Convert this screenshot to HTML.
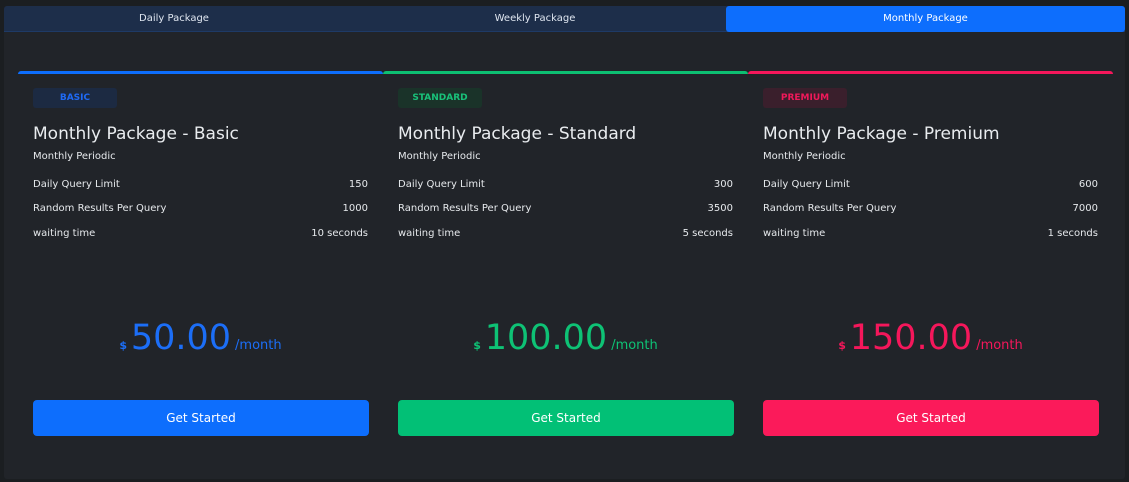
<!DOCTYPE html>
<html><head><style>
*{margin:0;padding:0;box-sizing:border-box}
body{width:1129px;height:482px;background:#1b1e21;font-family:"DejaVu Sans","Liberation Sans",sans-serif;color:#e6e9ec;overflow:hidden;position:relative}
.panel{position:absolute;left:4px;top:6px;width:1121px;height:473px;background:#212429;border-radius:3px}
.tabs{position:absolute;left:0;top:0;width:1121px;height:26px;background:#1d2e4a;border-bottom:1px solid #1e3a66;border-radius:3px 3px 0 0}
.tab{position:absolute;top:0;height:26px;line-height:25px;text-align:center;font-size:10px;color:#dfe6f0}
.tab.act{background:#0d6efd;border-radius:3px;color:#fff}
.card{position:absolute;top:65px;width:365px;height:400px;border-top:3px solid;border-radius:3px 3px 0 0}
.in{position:absolute;left:15px;right:15px;top:0}
.badge{position:absolute;top:14px;left:0;width:84px;height:20px;border-radius:3px;font-size:9px;font-weight:bold;text-align:center;line-height:20px}
.title{position:absolute;top:50px;left:0;font-size:17px;color:#e9ecef;white-space:nowrap}
.sub{position:absolute;top:77px;left:0;font-size:10px}
.row{position:absolute;left:0;right:0;font-size:10px;display:flex;justify-content:space-between}
.price{position:absolute;top:244px;left:0;right:0;text-align:center;white-space:nowrap}
.price .d{font-size:11px;font-weight:bold}
.price .n{font-size:35px}
.price .m{font-size:13px;margin-left:4px}
.btn{position:absolute;top:326px;left:0;right:-1px;height:36px;border-radius:4px;color:#fff;text-align:center;line-height:36px;font-size:12px}
</style></head><body>
<div class="panel">
<div class="tabs">
<div class="tab" style="left:0;width:340px">Daily Package</div>
<div class="tab" style="left:340px;width:382px">Weekly Package</div>
<div class="tab act" style="left:722px;width:399px">Monthly Package</div>
</div>

<div class="card" style="left:14px;border-color:#0d6efd">
<div class="in">
<div class="badge" style="background:#1c2a42;color:#1f6af5">BASIC</div>
<div class="title">Monthly Package - Basic</div>
<div class="sub">Monthly Periodic</div>
<div class="row" style="top:105px"><span>Daily Query Limit</span><span>150</span></div>
<div class="row" style="top:129px"><span>Random Results Per Query</span><span>1000</span></div>
<div class="row" style="top:154px"><span>waiting time</span><span>10 seconds</span></div>
<div class="price" style="color:#1c6ef7"><span class="d">$ </span><span class="n">50.00</span><span class="m">/month</span></div>
<div class="btn" style="background:#0d6efd">Get Started</div>
</div></div>

<div class="card" style="left:379px;border-color:#0dbf72">
<div class="in">
<div class="badge" style="background:#1a3329;color:#19c27a">STANDARD</div>
<div class="title">Monthly Package - Standard</div>
<div class="sub">Monthly Periodic</div>
<div class="row" style="top:105px"><span>Daily Query Limit</span><span>300</span></div>
<div class="row" style="top:129px"><span>Random Results Per Query</span><span>3500</span></div>
<div class="row" style="top:154px"><span>waiting time</span><span>5 seconds</span></div>
<div class="price" style="color:#0ec275"><span class="d">$ </span><span class="n">100.00</span><span class="m">/month</span></div>
<div class="btn" style="background:#02c076">Get Started</div>
</div></div>

<div class="card" style="left:744px;border-color:#f5175b">
<div class="in">
<div class="badge" style="background:#3a1f2c;color:#f0195a">PREMIUM</div>
<div class="title">Monthly Package - Premium</div>
<div class="sub">Monthly Periodic</div>
<div class="row" style="top:105px"><span>Daily Query Limit</span><span>600</span></div>
<div class="row" style="top:129px"><span>Random Results Per Query</span><span>7000</span></div>
<div class="row" style="top:154px"><span>waiting time</span><span>1 seconds</span></div>
<div class="price" style="color:#f5175b"><span class="d">$ </span><span class="n">150.00</span><span class="m">/month</span></div>
<div class="btn" style="background:#fb1a5a">Get Started</div>
</div></div>
</div>
</body></html>
